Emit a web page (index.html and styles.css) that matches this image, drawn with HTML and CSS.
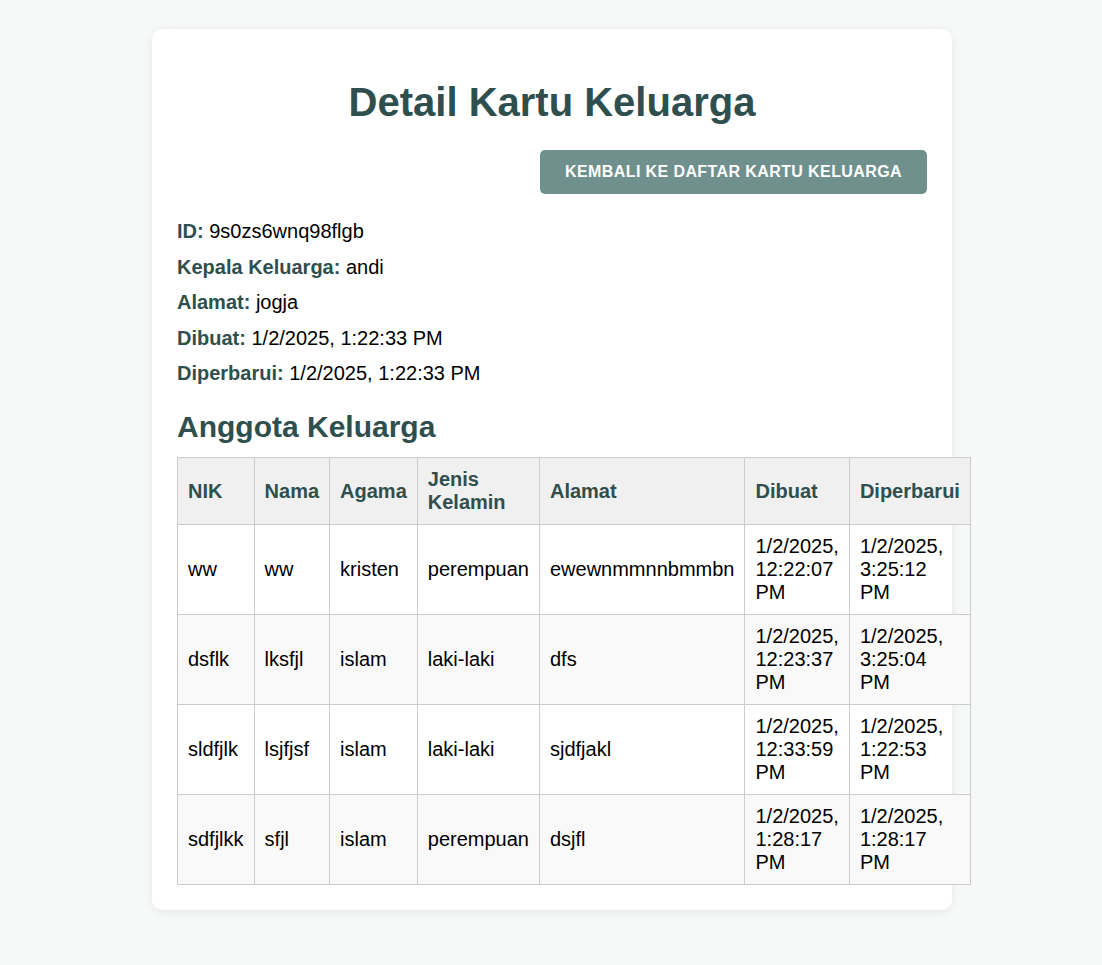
FILE: index.html
```html
<!DOCTYPE html>
<html lang="id">
<head>
<meta charset="utf-8">
<title>Detail Kartu Keluarga</title>
<link rel="stylesheet" href="styles.css">
</head>
<body>
<div class="card">
  <h1 class="title">Detail Kartu Keluarga</h1>
  <div class="actions">
    <a class="btn" href="#">Kembali ke Daftar Kartu Keluarga</a>
  </div>
  <div class="info">
    <p><strong>ID:</strong> 9s0zs6wnq98flgb</p>
    <p><strong>Kepala Keluarga:</strong> andi</p>
    <p><strong>Alamat:</strong> jogja</p>
    <p><strong>Dibuat:</strong> 1/2/2025, 1:22:33 PM</p>
    <p><strong>Diperbarui:</strong> 1/2/2025, 1:22:33 PM</p>
  </div>
  <h2 class="subtitle">Anggota Keluarga</h2>
  <table class="members">
    <thead>
      <tr>
        <th>NIK</th><th>Nama</th><th>Agama</th><th>Jenis Kelamin</th><th>Alamat</th><th>Dibuat</th><th>Diperbarui</th>
      </tr>
    </thead>
    <tbody>
      <tr>
        <td>ww</td><td>ww</td><td>kristen</td><td>perempuan</td><td>ewewnmmnnbmmbn</td><td>1/2/2025, 12:22:07 PM</td><td>1/2/2025, 3:25:12 PM</td>
      </tr>
      <tr>
        <td>dsflk</td><td>lksfjl</td><td>islam</td><td>laki-laki</td><td>dfs</td><td>1/2/2025, 12:23:37 PM</td><td>1/2/2025, 3:25:04 PM</td>
      </tr>
      <tr>
        <td>sldfjlk</td><td>lsjfjsf</td><td>islam</td><td>laki-laki</td><td>sjdfjakl</td><td>1/2/2025, 12:33:59 PM</td><td>1/2/2025, 1:22:53 PM</td>
      </tr>
      <tr>
        <td>sdfjlkk</td><td>sfjl</td><td>islam</td><td>perempuan</td><td>dsjfl</td><td>1/2/2025, 1:28:17 PM</td><td>1/2/2025, 1:28:17 PM</td>
      </tr>
    </tbody>
  </table>
</div>
</body>
</html>
```
FILE: styles.css
```css
html, body {
  margin: 0;
  padding: 0;
}
body {
  background: #f7f9f8;
  font-family: "Liberation Sans", Arial, sans-serif;
  color: #000;
  padding: 29px 0 40px 2px;
}
.card {
  box-sizing: border-box;
  width: 800px;
  margin: 0 auto;
  background: #fff;
  border-radius: 10px;
  box-shadow: 0 2px 10px rgba(0, 0, 0, 0.08);
  padding: 25px;
}
.title {
  margin: 25px 0 0;
  text-align: center;
  font-size: 40px;
  line-height: 46px;
  font-weight: bold;
  color: #2f4f4f;
}
.actions {
  display: flex;
  justify-content: flex-end;
  margin-top: 25px;
}
.btn {
  display: inline-block;
  background: #6f908d;
  color: #fff;
  text-decoration: none;
  text-transform: uppercase;
  font-size: 16px;
  font-weight: bold;
  line-height: 18.4px;
  letter-spacing: 0.4px;
  padding: 13px 25px;
  border-radius: 5px;
}
.info {
  margin-top: 26px;
}
.info p {
  margin: 0 0 12.5px;
  font-size: 20px;
  line-height: 23px;
}
.info p:last-child {
  margin-bottom: 0;
}
.info strong {
  color: #2f4f4f;
}
.subtitle {
  margin: 24px 0 13px;
  font-size: 30px;
  line-height: 35px;
  color: #2f4f4f;
}
.members {
  border-collapse: collapse;
  width: 100%;
  font-size: 20px;
  line-height: 23px;
}
.members th,
.members td {
  border: 1px solid #ccc;
  padding: 10px;
  text-align: left;
}
.members th {
  background: #f0f0f0;
  color: #2f4f4f;
  font-weight: bold;
}
.members tbody tr:nth-child(even) td {
  background: #f9f9f9;
}
```
